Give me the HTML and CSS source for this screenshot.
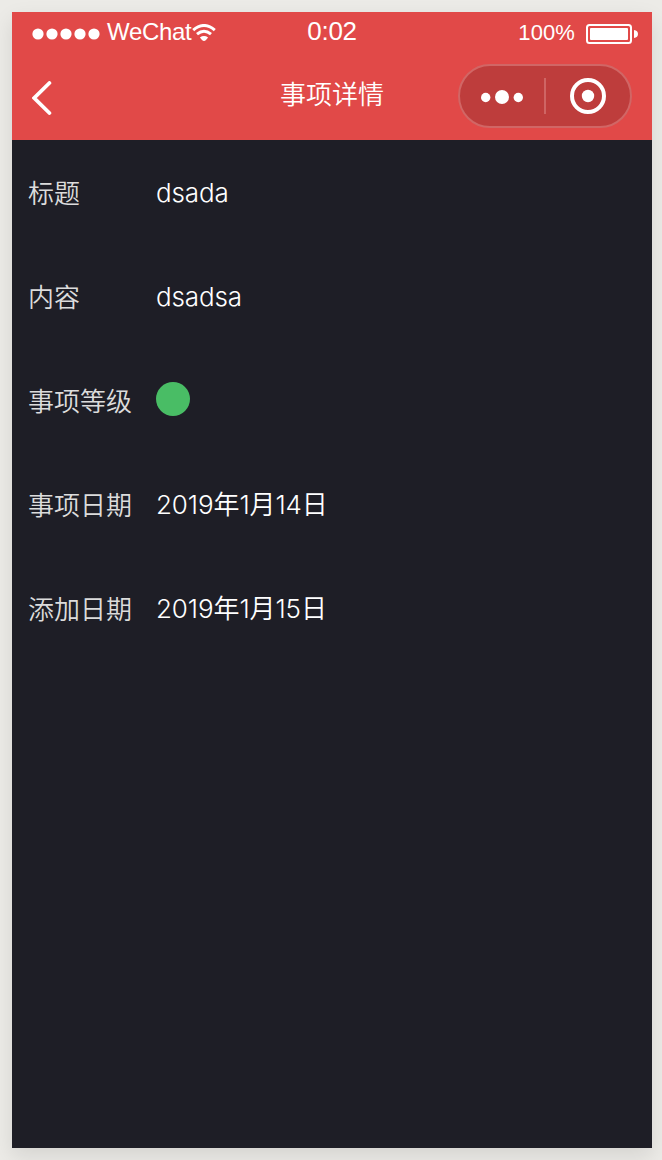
FILE: index.html
```html
<!DOCTYPE html>
<html lang="zh-CN">
<head>
<meta charset="utf-8">
<title>事项详情</title>
<link rel="stylesheet" href="styles.css">
</head>
<body>
<main class="phone">
  <header class="header">
    <div class="status">
      <div class="carrier">
        <svg class="signal" width="68" height="12" viewBox="0 0 68 12" fill="#fff"><circle cx="6" cy="6" r="5.6"/><circle cx="20" cy="6" r="5.6"/><circle cx="34" cy="6" r="5.6"/><circle cx="48" cy="6" r="5.6"/><circle cx="62" cy="6" r="5.6"/></svg>
        <span class="carrier-name">WeChat</span>
        <svg class="wifi" width="24" height="18" viewBox="0 0 24 18" fill="none" stroke="#fff" stroke-width="3"><path d="M1.2 6.1Q12-3.1 22.8 6.1"/><path d="M5 10.2Q12 4.4 19 10.2"/><path d="M7.9 13.5Q12 10.7 16.1 13.5L14 16Q12 18 10 16Z" fill="#fff" stroke="none"/></svg>
      </div>
      <span class="time">0:02</span>
      <div class="power">
        <span class="percent">100%</span>
        <svg width="52" height="20" viewBox="0 0 52 20"><rect x="1" y="1" width="44" height="18" rx="2.5" fill="none" stroke="#fff" stroke-width="2"/><rect x="4" y="4" width="38" height="12" rx="1" fill="#fff"/><path d="M48 6Q52 6.5 52 10T48 14Z" fill="#fff"/></svg>
      </div>
    </div>
    <nav class="nav">
      <svg class="back" width="20" height="34" viewBox="0 0 20 34" fill="none" stroke="#fff" stroke-width="3.8" stroke-linecap="round"><path d="M17.4 2L2.2 17L17.4 32"/></svg>
      <h1 class="title">事项详情</h1>
      <div class="capsule">
        <svg class="more" width="42" height="14" viewBox="0 0 42 14" fill="#fff"><circle cx="4.7" cy="7.5" r="4.7"/><circle cx="21" cy="7" r="7"/><circle cx="37.3" cy="7.5" r="4.7"/></svg>
        <span class="divider"></span>
        <svg class="close" width="36" height="36" viewBox="0 0 36 36"><circle cx="18" cy="18" r="16" fill="none" stroke="#fff" stroke-width="4"/><circle cx="18" cy="18" r="6.2" fill="#fff"/></svg>
      </div>
    </nav>
  </header>
  <dl class="details">
    <div class="row"><dt>标题</dt><dd class="text">dsada</dd></div>
    <div class="row"><dt>内容</dt><dd class="text">dsadsa</dd></div>
    <div class="row"><dt>事项等级</dt><dd><span class="level"></span></dd></div>
    <div class="row"><dt>事项日期</dt><dd class="date">2019年1月14日</dd></div>
    <div class="row"><dt>添加日期</dt><dd class="date">2019年1月15日</dd></div>
  </dl>
</main>
</body>
</html>
```
FILE: styles.css
```css
* { box-sizing: border-box; }
body {
  margin: 0;
  height: 1160px;
  padding: 12px 10px 12px 12px;
  overflow: hidden;
  background: #ecebe7;
  color: #fff;
  font-family: Inter, "Noto Sans CJK SC", sans-serif;
}
.phone {
  width: 640px;
  height: 1136px;
  background: #1e1e26;
  box-shadow: 0 8px 20px rgba(0, 0, 0, .1);
}
.header { height: 128px; background: #e14948; }
.status {
  display: grid;
  grid-template-columns: 1fr auto 1fr;
  height: 40px;
  padding: 0 14px 2px 20px;
  font-family: "Liberation Sans", Arial, sans-serif;
  line-height: 38px;
}
.carrier { display: flex; align-items: center; }
.signal { margin-top: 3px; }
.carrier-name { margin-left: 7px; font-size: 24px; letter-spacing: -.3px; }
.wifi { margin: 1px 0 0 1px; }
.time { font-size: 26px; letter-spacing: -.3px; transform: translateX(-3px); }
.power { display: flex; align-items: center; justify-content: flex-end; }
.percent { margin: 2px 11px 0 0; font-size: 22px; letter-spacing: .1px; }
.power svg { margin-top: 4px; }
.nav {
  display: grid;
  grid-template-columns: 1fr auto 1fr;
  align-items: center;
  height: 88px;
  padding: 0 20px;
}
.back { margin-top: 4px; }
.title { margin: 0 0 3px; font-size: 26px; font-weight: 350; line-height: 38px; }
.capsule {
  display: flex;
  align-items: center;
  justify-self: end;
  width: 174px;
  height: 64px;
  padding-left: 21px;
  border: 2px solid #d16665;
  border-radius: 32px;
  background: #be3d3c;
}
.more { margin-top: 1px; }
.divider { width: 2px; height: 36px; margin: 0 24px 0 21px; background: #cf6564; }
.details { margin: 0; }
.row { display: flex; align-items: center; height: 104px; padding: 0 16px; font-size: 26px; line-height: 38px; }
dt { width: 128px; padding-top: 4px; color: #dcdcdc; font-weight: 350; }
dd { margin: 0; }
.text { padding-top: 2px; font-weight: 350; letter-spacing: -.15px; }
.date { padding-top: 2px; font-weight: 350; letter-spacing: -.1px; }
.level { display: block; width: 34px; height: 34px; margin-bottom: 2px; border-radius: 50%; background: #49bd65; }
```
